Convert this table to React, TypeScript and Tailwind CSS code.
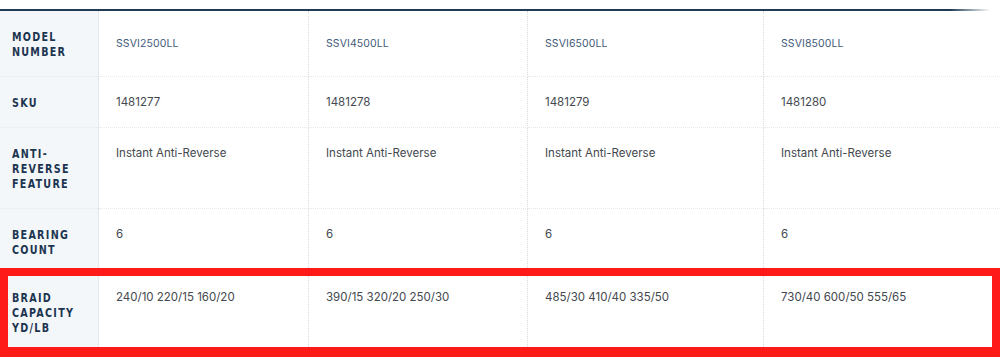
const models = ['SSVI2500LL', 'SSVI4500LL', 'SSVI6500LL', 'SSVI8500LL']

const rows = [
  { label: ['SKU'], values: ['1481277', '1481278', '1481279', '1481280'], pb: 'pb-[17px]' },
  {
    label: ['ANTI-', 'REVERSE', 'FEATURE'],
    values: ['Instant Anti-Reverse', 'Instant Anti-Reverse', 'Instant Anti-Reverse', 'Instant Anti-Reverse'],
    pb: 'pb-[17px]',
  },
  { label: ['BEARING', 'COUNT'], values: ['6', '6', '6', '6'], pb: 'pb-[14px]' },
  {
    label: ['BRAID', 'CAPACITY', 'YD/LB'],
    values: ['240/10 220/15 160/20', '390/15 320/20 250/30', '485/30 410/40 335/50', '730/40 600/50 555/65'],
    pb: 'pb-[17px]',
  },
]

const labelCls =
  "bg-[#f4f7f9] pl-[12px] pt-[18px] border-r border-dotted border-[#d5dadf] text-[13px] leading-[15px] tracking-[0.12em] font-bold text-[#1c3550] [font-family:'DejaVu_Sans_Condensed',sans-serif]"
const valueCls =
  "pl-[17px] pt-[18px] border-dotted border-[#d5dadf] text-[11.5px] leading-[15px] text-[#43484e] [font-family:Inter,sans-serif]"

function Label({ lines }: { lines: string[] }) {
  return (
    <div className="origin-left scale-x-[0.82]">
      {lines.map((l) => (
        <div key={l}>{l}</div>
      ))}
    </div>
  )
}

export default function App() {
  return (
    <div className="relative w-[1000px] h-[362px] bg-white overflow-hidden">
      <div className="mt-[9px] h-[2px] bg-[linear-gradient(to_right,#1f3a52_95%,transparent_99%)]" />

      <div className="grid grid-cols-[99px_210px_219px_236px_236px]">
        {/* header row */}
        <div className={`${labelCls} pb-[17px] border-b border-b-[#e6e9ec]`}>
          <Label lines={['MODEL', 'NUMBER']} />
        </div>
        {models.map((m, j) => (
          <div
            key={m}
            className={`pl-[17px] flex items-center border-dotted border-[#d5dadf] ${j < 3 ? 'border-r' : ''} border-b border-b-[#e6e9ec] text-[10.5px] text-[#3f5c7c] tracking-[0.01em] [font-family:Inter,sans-serif]`}
          >
            {m}
          </div>
        ))}

        {rows.map((row, i) => (
          <div key={i} className="contents">
            <div className={`${labelCls} ${row.pb} border-b border-b-[#e6e9ec]`}>
              <Label lines={row.label} />
            </div>
            {row.values.map((v, j) => (
              <div
                key={j}
                className={`${valueCls} ${row.pb} ${j < 3 ? 'border-r' : ''} border-b border-b-[#e6e9ec]`}
              >
                {v}
              </div>
            ))}
          </div>
        ))}
      </div>

      {/* highlight annotation */}
      <div className="absolute left-0 top-[268px] w-[1000px] h-[89px] border-[8px] border-b-[10px] border-[#ff1a1a]" />
    </div>
  )
}
